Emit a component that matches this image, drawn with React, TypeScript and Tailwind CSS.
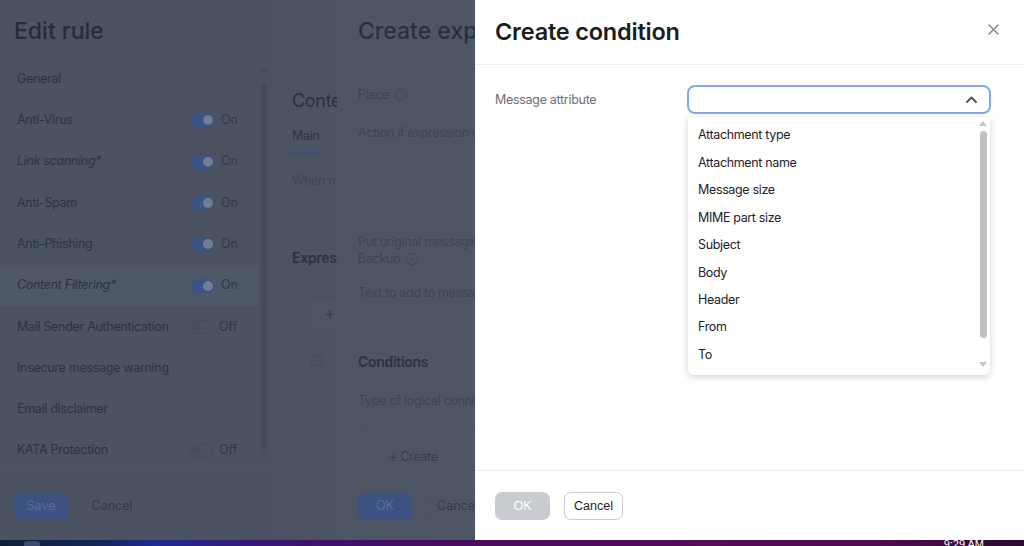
import React from "react";

const FONT = { fontFamily: "Inter, 'Noto Sans', sans-serif" };

type Rule = { name: string; italic?: boolean; toggle?: "on" | "off"; active?: boolean };

const RULES: Rule[] = [
  { name: "General" },
  { name: "Anti-Virus", toggle: "on" },
  { name: "Link scanning*", italic: true, toggle: "on" },
  { name: "Anti-Spam", toggle: "on" },
  { name: "Anti-Phishing", toggle: "on" },
  { name: "Content Filtering*", italic: true, toggle: "on", active: true },
  { name: "Mail Sender Authentication", toggle: "off" },
  { name: "Insecure message warning" },
  { name: "Email disclaimer" },
  { name: "KATA Protection", toggle: "off" },
];

const ATTRIBUTES = [
  "Attachment type",
  "Attachment name",
  "Message size",
  "MIME part size",
  "Subject",
  "Body",
  "Header",
  "From",
  "To",
];

const InfoDot = () => (
  <span className="ml-[6px] inline-flex h-[12px] w-[12px] shrink-0 items-center justify-center rounded-full border border-[#3e4655] text-[8px] leading-none text-[#3e4655]">
    i
  </span>
);

const Toggle = ({ on }: { on: boolean }) =>
  on ? (
    <div className="flex items-center gap-[6px]">
      <div className="flex h-[14px] w-[24px] items-center justify-end rounded-full bg-[#3b5487] pr-[2px]">
        <div className="h-[10px] w-[10px] rounded-full bg-[#737d8f]" />
      </div>
      <span className="text-[12.5px] text-[#303746]">On</span>
    </div>
  ) : (
    <div className="ml-[-2px] flex items-center gap-[6px]">
      <div className="flex h-[14px] w-[24px] items-center rounded-full border border-[#454d5c] pl-[2px]">
        <div className="h-[9px] w-[9px] rounded-full bg-[#464e5d]" />
      </div>
      <span className="text-[12.5px] text-[#303746]">Off</span>
    </div>
  );

// Левая панель: Edit rule (под затемнением)
function EditRulePanel() {
  return (
    <div className="flex h-full w-[275px] shrink-0 flex-col bg-[#4b5362]">
      <div className="h-[58.5px] pl-[14px] pt-[14px]">
        <h1 className="text-[23px] font-medium leading-[34px] text-[#262c38]">Edit rule</h1>
      </div>
      <div className="flex h-[411.5px]">
        <div className="w-[258px]">
          {RULES.map((r) => (
            <div
              key={r.name}
              className={`flex h-[41.3px] items-center pl-[17px] ${r.active ? "bg-[#4f5867]" : ""}`}
            >
              <span
                className={`w-[174px] whitespace-nowrap text-[12.5px] tracking-[-0.3px] text-[#2b3241] ${
                  r.italic ? "italic" : ""
                }`}
              >
                {r.name}
              </span>
              {r.toggle && <Toggle on={r.toggle === "on"} />}
            </div>
          ))}
        </div>
        <div className="flex w-[12px] flex-col items-center pt-[8px]">
          <div className="h-0 w-0 border-x-[4px] border-b-[5px] border-x-transparent border-b-[#444c5b]" />
          <div className="mt-[10px] h-[367px] w-[6px] rounded-full bg-[#444c5b]" />
          <div className="mt-[4px] h-0 w-0 border-x-[4px] border-t-[5px] border-x-transparent border-t-[#444c5b]" />
        </div>
      </div>
      <div className="flex gap-[15px] border-t border-[#4e5665] pl-[14px] pt-[22px]">
        <button className="h-[27px] w-[54px] rounded-[7px] bg-[#3c5283] text-[12.5px] text-[#5d6d91]">Save</button>
        <button className="h-[27px] w-[58px] rounded-[7px] border border-[#485060] text-[12.5px] text-[#333a48]">
          Cancel
        </button>
      </div>
    </div>
  );
}

// Средняя панель: Content Filtering (видна только полоска)
function ContentPanel() {
  return (
    <div className="h-full w-[62px] shrink-0 overflow-hidden bg-[#4c5463] pl-[17px] tracking-[-0.3px]">
      <div className="overflow-hidden whitespace-nowrap pt-[87px] text-[18px] leading-[28px] text-[#2a313e]">
        Content Filtering
      </div>
      <div className="mt-[12px] flex border-b border-[#47505f]">
        <div className="border-b-2 border-[#3b5080] pb-[6px] text-[12.5px] text-[#2d3442]">Main</div>
      </div>
      <div className="mt-[17px] overflow-hidden whitespace-nowrap text-[12.5px] text-[#3d4453]">When message matches</div>
      <div className="mt-[56px] overflow-hidden whitespace-nowrap text-[14px] font-semibold text-[#2a313e]">
        Expressions
      </div>
      <div className="mt-[17px] h-[190px] w-[300px] rounded-t-[10px] border border-[#47505f] pl-[17px] pt-[14px]">
        <div className="flex h-[26px] w-[40px] items-center justify-center bg-[#4e5665] text-[16px] text-[#333a48]">+</div>
        <div className="ml-[1px] mt-[29px] h-[11px] w-[11px] rounded-[3px] border border-[#444c5b]" />
      </div>
    </div>
  );
}

// Панель Create expression
function CreateExpressionPanel() {
  return (
    <div className="flex h-full w-[138px] shrink-0 flex-col overflow-hidden bg-[#4e5666]">
      <div className="h-[64px] border-b border-[#505969] pl-[21px] pt-[14px]">
        <div className="overflow-hidden whitespace-nowrap text-[23px] font-medium leading-[34px] text-[#283040]">
          Create expression
        </div>
      </div>
      <div className="pl-[21px] text-[12.5px] tracking-[-0.3px] text-[#3d4453]">
        <div className="mt-[22px] flex items-center">
          Place
          <InfoDot />
        </div>
        <div className="mt-[20px] overflow-hidden whitespace-nowrap">Action if expression matches</div>
        <div className="mt-[90px] overflow-hidden whitespace-nowrap leading-[17px]">Put original message to</div>
        <div className="flex items-center leading-[17px]">
          Backup
          <InfoDot />
        </div>
        <div className="mt-[17px] overflow-hidden whitespace-nowrap">Text to add to message</div>
        <div className="mt-[48px] text-[14px] font-semibold text-[#2a313e]">Conditions</div>
        <div className="mt-[20px] overflow-hidden whitespace-nowrap">Type of logical connection</div>
        <div className="mt-[17px] flex h-[43px] w-[300px] items-center gap-[60px] rounded-t-[10px] border border-b-0 border-[#4a5262] pl-[30px] pt-[15px]">
          <span className="text-[12.5px] text-[#353c4a]">+ Create</span>
          <span className="h-[24px] w-[20px] rounded-[4px] bg-[#535b6a]" />
        </div>
      </div>
      <div className="mt-auto flex h-[70px] gap-[14px] border-t border-[#505969] pl-[21px] pt-[21px]">
        <button className="h-[27px] w-[54px] shrink-0 rounded-[7px] bg-[#3c5283] text-[12.5px] text-[#5d6d91]">OK</button>
        <button className="h-[27px] w-[60px] shrink-0 overflow-hidden rounded-[7px] border border-[#4a5262] pl-[10px] text-left text-[12.5px] text-[#333a48]">
          Cancel
        </button>
      </div>
    </div>
  );
}

// Модальное окно: Create condition
function CreateConditionModal() {
  return (
    <div className="flex h-full flex-1 flex-col bg-white">
      <div className="flex h-[65px] items-center justify-between border-b border-[#eceef2] pl-[20px] pr-[25px]">
        <h2 className="text-[23.5px] font-semibold leading-[30px] tracking-[-0.2px] text-[#1c1d20]">Create condition</h2>
        <svg width="11" height="11" viewBox="0 0 11 11" className="mt-[-6px]">
          <path d="M1 1L10 10M10 1L1 10" stroke="#7b7f86" strokeWidth="1.4" strokeLinecap="round" />
        </svg>
      </div>
      <div className="flex-1 pl-[20px] pt-[20px]">
        <div className="flex">
          <div className="w-[192px] pt-[6px] text-[12.5px] tracking-[-0.3px] text-[#6b6f77]">Message attribute</div>
          <div className="w-[304px]">
            <div className="flex h-[29px] items-center justify-end rounded-[8px] border-2 border-[#82a8f0] pr-[12px]">
              <svg width="11" height="7" viewBox="0 0 11 7">
                <path d="M1 6L5.5 1.5L10 6" fill="none" stroke="#4a4e55" strokeWidth="1.8" strokeLinecap="round" strokeLinejoin="round" />
              </svg>
            </div>
            <div className="ml-[1px] mt-[3px] flex h-[258px] w-[302px] rounded-b-[6px] bg-white shadow-[0_2px_7px_rgba(0,0,0,0.18)]">
              <div className="flex-1 pt-[5px]">
                {ATTRIBUTES.map((a) => (
                  <div
                    key={a}
                    className="flex h-[27.45px] items-center pl-[10px] text-[12.5px] tracking-[-0.35px] text-[#1f2329]"
                  >
                    {a}
                  </div>
                ))}
              </div>
              <div className="flex w-[14px] flex-col items-center pt-[4px]">
                <div className="h-0 w-0 border-x-[4px] border-b-[5px] border-x-transparent border-b-[#c4c4c4]" />
                <div className="mt-[5px] h-[207px] w-[7px] rounded-full bg-[#c1c1c1]" />
                <div className="mt-[24px] h-0 w-0 border-x-[4px] border-t-[5px] border-x-transparent border-t-[#c4c4c4]" />
              </div>
            </div>
          </div>
        </div>
      </div>
      <div className="flex h-[70px] gap-[14px] border-t border-[#eceef2] pl-[20px] pt-[21px]">
        <button
          className="h-[28px] w-[55px] rounded-[7px] bg-[#c8cbd0] text-[12.5px] text-white"
          style={{ fontFamily: "'Liberation Sans', sans-serif" }}
        >
          OK
        </button>
        <button
          className="h-[28px] w-[59px] rounded-[7px] border border-[#c9ccd1] text-[12.5px] text-[#222428]"
          style={{ fontFamily: "'Liberation Sans', sans-serif" }}
        >
          Cancel
        </button>
      </div>
    </div>
  );
}

export default function App() {
  return (
    <div className="flex h-[546px] w-[1024px] flex-col overflow-hidden" style={FONT}>
      <div className="flex h-[540px]">
        <EditRulePanel />
        <ContentPanel />
        <CreateExpressionPanel />
        <CreateConditionModal />
      </div>
      {/* панель задач */}
      <div className="flex h-[6px] items-start justify-between overflow-hidden bg-[linear-gradient(90deg,#0f1f38_0%,#13265a_10%,#1e2a96_15%,#3a1474_26%,#4a0c5e_45%,#560a5a_70%,#4c0a4c_88%,#2a0a30_100%)]">
        <div className="ml-[24px] mt-[1px] h-[8px] w-[16px] rounded-[3px] bg-[#3b4a6e]" />
        <div
          className="mr-[40px] mt-[-2px] text-[11px] leading-[12px] text-white"
          style={{ fontFamily: "'Liberation Sans', sans-serif" }}
        >
          9:29 AM
        </div>
      </div>
    </div>
  );
}
